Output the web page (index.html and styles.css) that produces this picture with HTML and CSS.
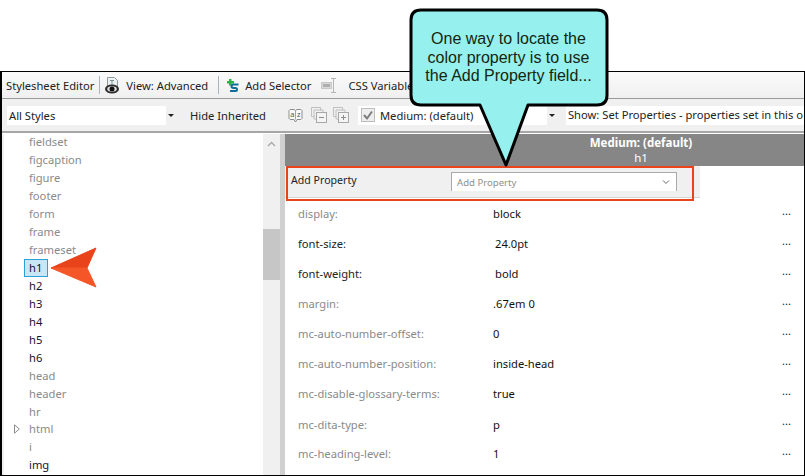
FILE: index.html
```html
<!DOCTYPE html>
<html lang="en">
<head>
    <meta charset="UTF-8">
    <meta name="viewport" content="width=device-width, initial-scale=1.0">
    <title>Stylesheet Editor</title>
    <link rel="stylesheet" href="styles.css">
</head>
<body>
    <div class="window">
        <div class="toolbar">
            <span class="tool-title">Stylesheet Editor</span>
            <span class="sep"></span>
            <svg class="icon" width="14" height="17" viewBox="0 0 14 17">
                <path d="M2.500 .5h7l3 3V10h-10z" fill="#eef1f1" stroke="#8a9a9c"/>
                <path d="M5 3.500h4M7 3.500v4" stroke="#7d8f92" fill="none"/>
                <ellipse cx="7" cy="12" rx="7" ry="4.500" fill="#2c2c2c"/>
                <ellipse cx="7" cy="12" rx="4.800" ry="2.800" fill="#ddd"/>
                <circle cx="7" cy="12" r="2.500" fill="#111"/>
            </svg>
            <span class="tool-label view-label">View: Advanced</span>
            <span class="sep"></span>
            <svg class="icon add-icon" width="12" height="13" viewBox="0 0 12 13">
                <path d="M2 0h2.500v2H7v2.500H4.500v2H2v-2H0V2h2z" fill="#29b34a"/>
                <path d="M11.500 5.500H6.500Q4.500 5.500 4.500 7.250T6.500 9H8.500Q10 9 10 10.500T8.500 12H3" fill="none" stroke="#0f6f99" stroke-width="2"/>
            </svg>
            <span class="tool-label add-label">Add Selector</span>
            <svg class="icon" width="16" height="15" viewBox="0 0 16 15">
                <rect x=".5" y="4.500" width="10" height="6" fill="#d8d8d8" stroke="#c8c8c8"/>
                <rect x="2" y="6" width="7" height="3" fill="#aeaeae"/>
                <path d="M10 .5h5M12.500 .5v14M10 14.500h5" fill="none" stroke="#b5b5b5"/>
            </svg>
            <span class="tool-label css-label">CSS Variables</span>
        </div>

        <div class="filterbar">
            <div class="combo styles-combo">
                <span>All Styles</span>
                <span class="combo-arrow"></span>
            </div>
            <span class="hide-inherited">Hide Inherited</span>
            <svg class="icon az-icon" width="15" height="15" viewBox="0 0 15 15">
                <path d="M2 1.500h4l1.500 1 1.500-1h4l1 1v8l-1 1H9l-1.500 2.500-1.500-2.500H2l-1-1v-8z" fill="#fafafa" stroke="#8d8d8d"/>
                <path d="M7.500 2.500v9" stroke="#a5a5a5"/>
                <text x="2.300" y="9" class="az-text">a</text>
                <text x="8.900" y="9" class="az-text">z</text>
            </svg>
            <svg class="icon minus-icon" width="16" height="16" viewBox="0 0 16 16">
                <path d="M.5 .5h9v3M.5 .5v9h3M3 3h9v3M3 3v9h2" fill="none" stroke="#c0c0c0"/>
                <rect x="5.500" y="5.500" width="10" height="10" fill="#f4f4f4" stroke="#a8a8a8"/>
                <path d="M8 10.500h5" stroke="#8c8c8c"/>
            </svg>
            <svg class="icon plus-icon" width="16" height="16" viewBox="0 0 16 16">
                <path d="M.5 .5h9v3M.5 .5v9h3M3 3h9v3M3 3v9h2" fill="none" stroke="#c0c0c0"/>
                <rect x="5.500" y="5.500" width="10" height="10" fill="#f4f4f4" stroke="#a8a8a8"/>
                <path d="M8 10.500h5M10.500 8v5" stroke="#8c8c8c"/>
            </svg>
            <div class="combo medium-combo">
                <span class="checkbox">
                    <svg width="12" height="12" viewBox="0 0 12 12">
                        <path d="M2 6l3 3.500 5-7" fill="none" stroke="#7c7c7c" stroke-width="2"/>
                    </svg>
                </span>
                <span>Medium: (default)</span>
                <span class="combo-arrow"></span>
            </div>
            <div class="show-box">Show: Set Properties - properties set in this o</div>
        </div>

        <div class="panes">
            <div class="tree-pane">
                <ul class="tree">
                    <li class="muted">fieldset</li>
                    <li class="muted">figcaption</li>
                    <li class="muted">figure</li>
                    <li class="muted">footer</li>
                    <li class="muted">form</li>
                    <li class="muted">frame</li>
                    <li class="muted">frameset</li>
                    <li class="selected"><span>h1</span></li>
                    <li>h2</li>
                    <li>h3</li>
                    <li>h4</li>
                    <li>h5</li>
                    <li>h6</li>
                    <li class="muted">head</li>
                    <li class="muted">header</li>
                    <li class="muted">hr</li>
                    <li class="muted expandable">
                        <svg class="expander" width="6" height="10" viewBox="0 0 6 10">
                            <path d="M.5 .8L5.300 5 .5 9.200z" fill="#fff" stroke="#8c8c8c"/>
                        </svg>
                        html
                    </li>
                    <li class="muted">i</li>
                    <li>img</li>
                </ul>
                <div class="scrollbar">
                    <svg class="scroll-up" width="9" height="6" viewBox="0 0 9 6">
                        <path d="M1 5l3.500-3.500L8 5" fill="none" stroke="#a8a8a8" stroke-width="1.300"/>
                    </svg>
                    <div class="scroll-thumb"></div>
                </div>
            </div>
            <div class="splitter"></div>
            <div class="props-pane">
                <div class="props-head">
                    <strong>Medium: (default)</strong>
                    <span>h1</span>
                </div>
                <div class="add-row">
                    <span class="add-title">Add Property</span>
                    <div class="add-field">
                        <span>Add Property</span>
                        <svg width="8" height="5" viewBox="0 0 8 5">
                            <path d="M1 .5L4 3.500 7 .5" fill="none" stroke="#666"/>
                        </svg>
                    </div>
                </div>
                <div class="prop"><span class="prop-name muted">display:</span><span class="prop-val">block</span><span class="prop-more">...</span></div>
                <div class="prop"><span class="prop-name">font-size:</span><span class="prop-val indent">24.0pt</span><span class="prop-more">...</span></div>
                <div class="prop"><span class="prop-name">font-weight:</span><span class="prop-val indent">bold</span><span class="prop-more">...</span></div>
                <div class="prop"><span class="prop-name muted">margin:</span><span class="prop-val">.67em 0</span><span class="prop-more">...</span></div>
                <div class="prop"><span class="prop-name muted">mc-auto-number-offset:</span><span class="prop-val">0</span><span class="prop-more">...</span></div>
                <div class="prop"><span class="prop-name muted">mc-auto-number-position:</span><span class="prop-val">inside-head</span><span class="prop-more">...</span></div>
                <div class="prop"><span class="prop-name muted">mc-disable-glossary-terms:</span><span class="prop-val">true</span><span class="prop-more">...</span></div>
                <div class="prop low"><span class="prop-name muted">mc-dita-type:</span><span class="prop-val">p</span><span class="prop-more">...</span></div>
                <div class="prop"><span class="prop-name muted">mc-heading-level:</span><span class="prop-val">1</span><span class="prop-more">...</span></div>
            </div>
        </div>
    </div>

    <!-- annotations on top of the screenshot -->
    <div class="red-box"></div>
    <svg class="arrow" width="48" height="42" viewBox="0 0 48 42">
        <path d="M1 21L46 1 37 21z" fill="#e8431a" stroke="#e8431a" stroke-linejoin="round"/>
        <path d="M1 21L46 40 37 21z" fill="#f55628" stroke="#f55628" stroke-linejoin="round"/>
    </svg>
    <svg class="bubble" width="202" height="162" viewBox="0 0 202 162">
        <path d="M12 2H188Q198 2 198 12V87Q198 97 188 97H119L97 157 71 97H12Q2 97 2 87V12Q2 2 12 2z" fill="#96f0ed" stroke="#000" stroke-width="3" stroke-linejoin="round"/>
    </svg>
    <div class="bubble-text">One way to locate the color property is to use the Add Property field...</div>
</body>
</html>
```

FILE: styles.css
```css
* {
    box-sizing: border-box;
}

html, body {
    height: 100%;
}

body {
    margin: 0;
    background: #fff;
    overflow: hidden;
    font-family: "Noto Sans", "Open Sans", sans-serif;
    font-size: 11.2px;
    color: #222;
}

.window {
    height: 405px;
    margin-top: 71px;
    border: 1px solid #000;
    border-left-width: 2px;
    border-right-width: 1px;
    display: flex;
    flex-direction: column;
    overflow: hidden;
}

.icon {
    flex: none;
    display: block;
}

.toolbar {
    height: 27px;
    flex: none;
    display: flex;
    align-items: center;
    padding-left: 4px;
    background: linear-gradient(#fafafa, #f0f0f0);
    border-bottom: 1px solid #9a9a9a;
}

.tool-title {
    margin-right: 5px;
    white-space: nowrap;
}

.sep {
    width: 1px;
    height: 18px;
    background: #a9b4bd;
    margin-right: 5px;
}

.tool-label {
    white-space: nowrap;
}

.view-label {
    margin: 0 10px 0 7px;
}

.add-icon {
    margin-left: 3px;
}

.add-label {
    margin: 0 10px 0 6px;
}

.css-label {
    margin-left: 11px;
}

.filterbar {
    height: 34px;
    flex: none;
    display: flex;
    align-items: center;
    padding-left: 5px;
    background: #f0f0f0;
    border-bottom: 2px solid #a6a6a6;
}

.combo {
    display: flex;
    align-items: center;
    height: 19px;
    background: #fff;
    position: relative;
    padding-left: 2px;
}

.combo-arrow {
    position: absolute;
    right: 0;
    top: 0;
    width: 11px;
    height: 19px;
    background: #f0f0f0;
}

.combo-arrow::after {
    content: "";
    position: absolute;
    left: 2px;
    top: 8px;
    border: 3px solid transparent;
    border-top: 3px solid #222;
    border-bottom: 0;
}

.styles-combo {
    width: 170px;
}

.hide-inherited {
    margin-left: 13px;
    white-space: nowrap;
}

.az-icon {
    margin-left: 22px;
}

.az-text {
    font-size: 7.500px;
    fill: #555;
}

.minus-icon {
    margin-left: 8px;
}

.plus-icon {
    margin-left: 6px;
}

.medium-combo {
    width: 200px;
    margin-left: 9px;
    padding-left: 3px;
    gap: 5px;
}

.checkbox {
    width: 14px;
    height: 14px;
    background: #eee;
    border: 1px solid #bdbdbd;
    display: flex;
    align-items: center;
    justify-content: center;
}

.show-box {
    flex: 1;
    height: 19px;
    margin-left: 8px;
    padding-left: 2px;
    line-height: 18px;
    background: #fff;
    white-space: nowrap;
    overflow: hidden;
}

.panes {
    flex: 1;
    display: flex;
    min-height: 0;
    padding-top: 1px;
    background: #fff;
}

.tree-pane {
    width: 278px;
    flex: none;
    display: flex;
    padding-left: 2px;
    background: linear-gradient(90deg, #f0f0f0 2px, #fff 2px);
}

.tree {
    flex: 1;
    list-style: none;
    margin: -1px 0 0;
    padding: 0 0 0 25px;
}

.tree li {
    height: 18px;
    line-height: 18px;
    color: #1a1030;
    position: relative;
}

.tree li.muted {
    color: #8a8a8a;
}

.tree .selected span {
    display: block;
    width: 24px;
    height: 18px;
    margin-left: -5px;
    padding-left: 4px;
    line-height: 16px;
    background: #c9e6f5;
    border: 1px solid #2b9fd9;
}

.tree .expandable {
    margin-top: -1px;
}

.expander {
    position: absolute;
    left: -15px;
    top: 4px;
}

.scrollbar {
    width: 17px;
    flex: none;
    background: #f0f0f0;
    padding-top: 7px;
}

.scroll-up {
    display: block;
    margin: 0 auto;
}

.scroll-thumb {
    height: 51px;
    margin-top: 82px;
    background: #c6c6c6;
}

.splitter {
    width: 5px;
    flex: none;
    background: #d0d0d0;
}

.props-pane {
    flex: 1;
    min-width: 0;
    background: #fff;
}

.props-head {
    height: 32px;
    background: #868686;
    color: #fff;
    display: flex;
    flex-direction: column;
    align-items: center;
    line-height: 15px;
    padding-top: 1px;
    padding-left: 193px;
    font-size: 11.500px;
}

.add-row {
    width: 415px;
    height: 32px;
    display: flex;
    background: #f0f0f0;
    border-bottom: 1px solid #d4d4d4;
}

.add-title {
    margin: 7px 0 0 6px;
    width: 160px;
    font-size: 10.600px;
}

.add-field {
    width: 226px;
    height: 19px;
    margin-top: 6px;
    display: flex;
    align-items: center;
    justify-content: space-between;
    padding: 0 6px 0 5px;
    background: #fff;
    border: 1px solid #a9a9a9;
    border-bottom: 0;
    color: #8f8f8f;
    font-size: 9.600px;
}

.prop {
    height: 30px;
    display: flex;
    align-items: center;
    position: relative;
}

.prop.low {
    padding-top: 2px;
}

.prop-name {
    width: 208px;
    padding-left: 13px;
    color: #222;
}

.prop-name.muted {
    color: #8a8a8a;
}

.prop-val {
    color: #111;
}

.prop-val.indent {
    margin-left: 2px;
}

.prop-more {
    position: absolute;
    left: 497px;
    top: 5px;
    color: #222;
}

.red-box {
    position: absolute;
    left: 286px;
    top: 166px;
    width: 408px;
    height: 35px;
    border: 2px solid #e8431a;
}

.arrow {
    position: absolute;
    left: 50px;
    top: 247px;
}

.bubble {
    position: absolute;
    left: 409px;
    top: 8px;
}

.bubble-text {
    position: absolute;
    left: 420px;
    top: 30px;
    width: 177px;
    text-align: center;
    font-family: "Liberation Sans", Arial, sans-serif;
    font-size: 16px;
    line-height: 18.500px;
    color: #14260f;
}
```
